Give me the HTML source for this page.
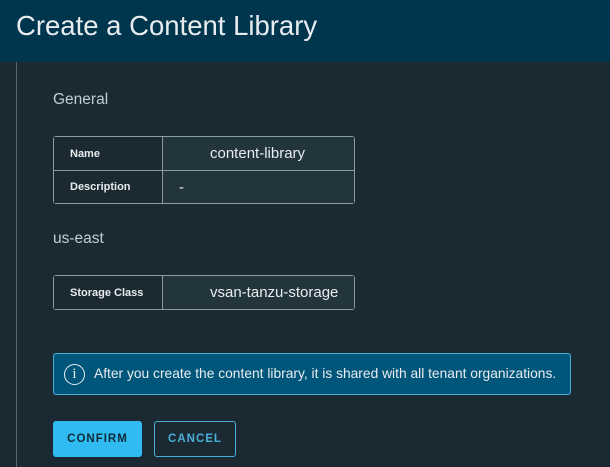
<!DOCTYPE html>
<html><head><style>
*{margin:0;padding:0;box-sizing:border-box}
body{width:610px;height:467px;background:#1b2a32;font-family:"Liberation Sans",sans-serif;position:relative;overflow:hidden}
.hdr{position:absolute;left:0;top:0;width:610px;height:62px;background:#00364d}
.hdr h1{position:absolute;left:16px;top:10px;font-weight:normal;font-size:27.5px;color:#e9ecef}
.vl{position:absolute;left:16px;top:62px;width:1px;height:405px;background:#56666d}
.sec{position:absolute;left:53px;font-size:15.5px;color:#c1cdd4}
table{position:absolute;left:53px;border-collapse:separate;border-spacing:0;border:1px solid #8c9ba2;border-radius:3px;width:302px}
td{height:33px;font-size:15px;color:#e9ecef}
td.l{width:109px;padding-left:16px;font-size:11px;font-weight:bold;border-right:1px solid #8c9ba2;background:#1b2a32}
td.v{background:#22343c;padding-left:47px}
tr+tr td{border-top:1px solid #8c9ba2}
.info{position:absolute;left:53px;top:353px;width:518px;height:42px;background:#00567a;border:1px solid #49afd9;border-radius:3px;color:#e9ecef;font-size:13.8px}
.info span{position:absolute;left:40px;top:12px;white-space:nowrap}
.ic{position:absolute;left:10px;top:10px;width:21px;height:21px;border:1.5px solid #e9ecef;border-radius:50%;text-align:center;font-family:"Liberation Serif",serif;font-size:15px;line-height:18px}
.btn{position:absolute;top:421px;height:36px;border-radius:3px;font-size:11.5px;font-weight:bold;letter-spacing:1px;text-align:center;line-height:36px}
</style></head><body>
<div class="hdr"><h1>Create a Content Library</h1></div>
<div class="vl"></div>
<div class="sec" style="top:91px">General</div>
<table style="top:136px"><tr><td class="l">Name</td><td class="v">content-library</td></tr><tr><td class="l">Description</td><td class="v" style="padding-left:16px">-</td></tr></table>
<div class="sec" style="top:230px">us-east</div>
<table style="top:275px"><tr><td class="l">Storage Class</td><td class="v">vsan-tanzu-storage</td></tr></table>
<div class="info"><div class="ic">i</div><span>After you create the content library, it is shared with all tenant organizations.</span></div>
<div class="btn" style="left:53px;width:89px;background:#30bcf2;color:#0e2a36">CONFIRM</div>
<div class="btn" style="left:154px;width:82px;border:1px solid #49afd9;color:#49afd9;line-height:34px">CANCEL</div>
</body></html>
